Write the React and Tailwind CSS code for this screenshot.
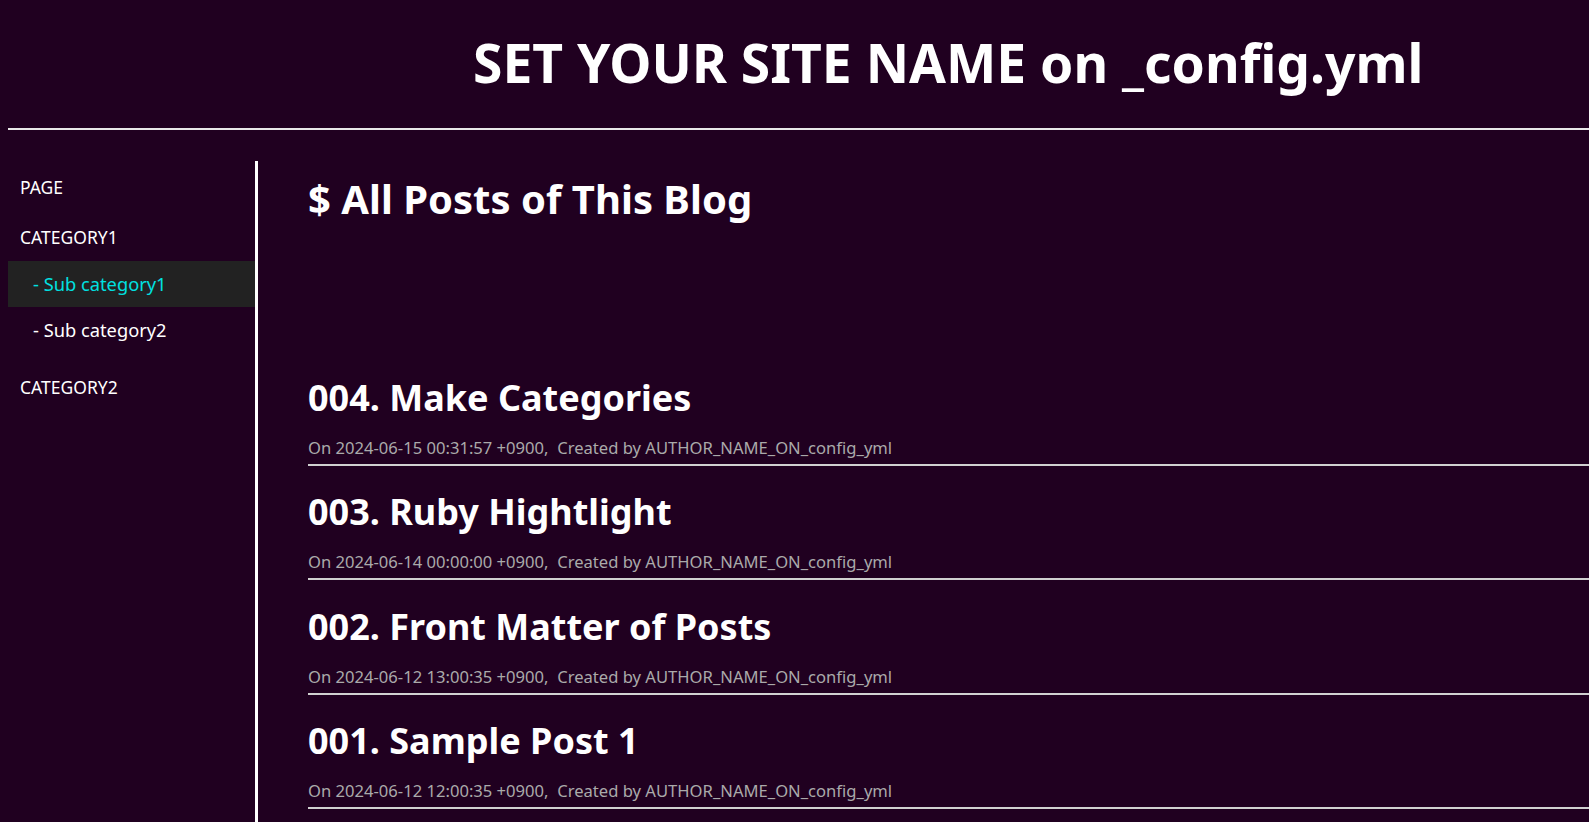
import React from "react";

const posts = [
  { title: "004. Make Categories", date: "2024-06-15 00:31:57 +0900" },
  { title: "003. Ruby Hightlight", date: "2024-06-14 00:00:00 +0900" },
  { title: "002. Front Matter of Posts", date: "2024-06-12 13:00:35 +0900" },
  { title: "001. Sample Post 1", date: "2024-06-12 12:00:35 +0900" },
];

export default function App() {
  return (
    <div
      className="min-h-screen bg-[#200020] text-white pl-2"
      style={{ fontFamily: '"Noto Sans", "Open Sans", sans-serif' }}
    >
      <header className="h-[130px] flex items-center pl-[465px] border-b-2 border-[#e8e8e8]">
        <h1 className="text-[53.4px] font-bold leading-none -mt-[2px] whitespace-nowrap">SET YOUR SITE NAME on _config.yml</h1>
      </header>
      <div className="flex pt-[31px]">
        <nav className="w-[250px] shrink-0 border-r-[3px] border-white min-h-[661px] pt-[14px]">
          <div className="pl-3 text-[17.5px] h-[24px] leading-[24px]">PAGE</div>
          <div className="pl-3 text-[17.5px] h-[24px] leading-[24px] mt-[26px]">CATEGORY1</div>
          <div className="mt-[12px] h-[46px] bg-[#222222] flex items-center pl-[25px] text-[18.3px] text-[#00e0e0]">- Sub category1</div>
          <div className="h-[46px] flex items-center pl-[25px] text-[18.3px]">- Sub category2</div>
          <div className="pl-3 text-[17.5px] h-[24px] leading-[24px] mt-[22px]">CATEGORY2</div>
        </nav>
        <main className="flex-1 pl-[50px] pt-[14px]">
          <h2 className="text-[40px] font-bold leading-[48px] whitespace-nowrap">$ All Posts of This Blog</h2>
          <div className="mt-[129px]">
            {posts.map((p) => (
              <div key={p.title} className="border-b-2 border-[#d0d0d0] h-[114.2px] flex flex-col justify-end pb-[6px]">
                <div className="text-[36px] font-bold leading-[48px] whitespace-nowrap">{p.title}</div>
                <div className="text-[16.6px] text-[#aaaaaa] mt-[16px] leading-[20px] whitespace-nowrap">
                  On {p.date},&nbsp;&nbsp;Created by AUTHOR_NAME_ON_config_yml
                </div>
              </div>
            ))}
          </div>
        </main>
      </div>
    </div>
  );
}
